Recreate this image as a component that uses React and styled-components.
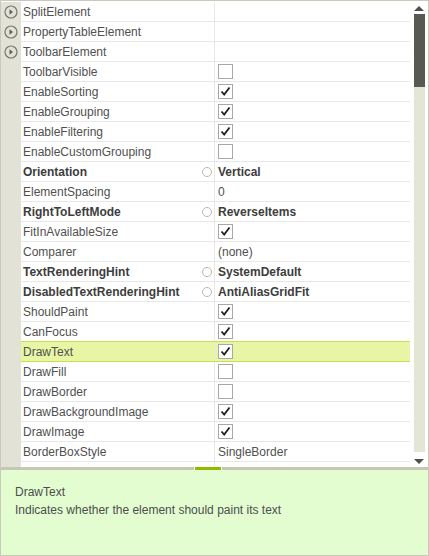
import React from 'react';
import styled, { createGlobalStyle } from 'styled-components';

// --- Global ---

const GlobalStyle = createGlobalStyle`
  html, body {
    margin: 0;
    padding: 0;
    background: #ffffff;
  }
  body {
    font-family: 'Liberation Sans', Arial, sans-serif;
  }
`;

// --- Styled Components ---

const Frame = styled.div`
  width: 429px;
  height: 556px;
  box-sizing: border-box;
  border: 1px solid #c9cabb;
  display: flex;
  flex-direction: column;
  overflow: hidden;
`;

const GridArea = styled.div`
  height: 466px;
  flex-shrink: 0;
  display: flex;
  padding-top: 1px;
  box-sizing: border-box;
  background: #ffffff;
  overflow: hidden;
`;

const Gutter = styled.div`
  width: 20px;
  flex-shrink: 0;
  background: #e2e3d6;
  display: flex;
  flex-direction: column;
`;

const GutterCell = styled.div`
  height: 20px;
  flex-shrink: 0;
  display: flex;
  align-items: center;
  justify-content: center;
`;

const Table = styled.div`
  flex: 1;
  display: flex;
  flex-direction: column;
  overflow: hidden;
`;

const Row = styled.div`
  flex-shrink: 0;
  box-sizing: border-box;
  display: flex;
  background: ${p => (p.$selected ? '#e7f5a4' : '#ffffff')};
  border-bottom: 1px solid ${p => (p.$selected ? '#c6e04e' : '#e8e8e8')};
  border-top: ${p => (p.$selected ? '1px solid #c6e04e' : '0')};
  margin-top: ${p => (p.$selected ? '-1px' : '0')};
  height: ${p => (p.$selected ? '21px' : '20px')};
`;

const NameCell = styled.div`
  width: 194px;
  flex-shrink: 0;
  box-sizing: border-box;
  border-right: 1px solid #e8e8e8;
  padding-left: 2px;
  padding-right: 2px;
  display: flex;
  align-items: center;
  justify-content: space-between;
  font-size: 12px;
  font-weight: ${p => (p.$bold ? 700 : 400)};
  color: ${p => (p.$bold ? '#3d3d3d' : '#505050')};
  white-space: nowrap;
  overflow: hidden;
`;

const ValueCell = styled.div`
  flex: 1;
  display: flex;
  align-items: center;
  padding-left: 3px;
  font-size: 12px;
  font-weight: ${p => (p.$bold ? 700 : 400)};
  color: ${p => (p.$bold ? '#3d3d3d' : '#505050')};
  white-space: nowrap;
  overflow: hidden;
`;

const CheckBox = styled.div`
  width: 15px;
  height: 15px;
  box-sizing: border-box;
  border: 1px solid #a8a8a8;
  background: #ffffff;
  display: flex;
  align-items: center;
  justify-content: center;
`;

const DefaultMark = styled.span`
  width: 10px;
  height: 10px;
  box-sizing: border-box;
  border: 1.5px solid #b8b9ac;
  border-radius: 50%;
  flex-shrink: 0;
`;

const ScrollBar = styled.div`
  width: 18px;
  flex-shrink: 0;
  background: #ffffff;
  display: flex;
  flex-direction: column;
  align-items: center;
  padding: 2px 0 1px;
  box-sizing: border-box;
`;

const Arrow = styled.div`
  width: 0;
  height: 0;
  border-left: 5px solid transparent;
  border-right: 5px solid transparent;
  ${p => (p.$down ? 'border-top: 5px solid #4f5049;' : 'border-bottom: 5px solid #4f5049;')}
  margin: 2px 0;
`;

const Track = styled.div`
  flex: 1;
  width: 11px;
  margin: 1px 0 5px;
  background: #e3e5d5;
  display: flex;
  flex-direction: column;
`;

const Thumb = styled.div`
  height: 73px;
  background: #585a52;
`;

const Splitter = styled.div`
  height: 3px;
  flex-shrink: 0;
  background: #c5c6b6;
  display: flex;
  justify-content: center;
  padding-right: 13px;
`;

const SplitHandle = styled.div`
  width: 26px;
  height: 4px;
  background: #8fbb00;
  border-left: 1px solid #ffffff;
  border-right: 1px solid #ffffff;
  border-top: 1px solid #ffffff;
  margin-top: -1px;
`;

const HelpPanel = styled.div`
  flex: 1;
  background: #e3fdd1;
  padding: 13px 14px;
  font-size: 12px;
  color: #4d4d4d;
  line-height: 18px;
`;

// --- Icons ---

const ExpandIcon = () => (
  <svg width="14" height="14" viewBox="0 0 14 14">
    <circle cx="7" cy="7" r="6" fill="none" stroke="#76776e" strokeWidth="1.2" />
    <path d="M5.5 4.2 L9 7 L5.5 9.8 Z" fill="#5e5f57" />
  </svg>
);

const CheckMark = () => (
  <svg width="11" height="11" viewBox="0 0 11 11">
    <path d="M1.5 5.5 L4.2 8.5 L9.5 1.5" fill="none" stroke="#1e1e1e" strokeWidth="1.8" />
  </svg>
);

// --- Data ---

const rows = [
  { name: 'SplitElement', expand: true },
  { name: 'PropertyTableElement', expand: true },
  { name: 'ToolbarElement', expand: true },
  { name: 'ToolbarVisible', check: false },
  { name: 'EnableSorting', check: true },
  { name: 'EnableGrouping', check: true },
  { name: 'EnableFiltering', check: true },
  { name: 'EnableCustomGrouping', check: false },
  { name: 'Orientation', value: 'Vertical', bold: true },
  { name: 'ElementSpacing', value: '0' },
  { name: 'RightToLeftMode', value: 'ReverseItems', bold: true },
  { name: 'FitInAvailableSize', check: true },
  { name: 'Comparer', value: '(none)' },
  { name: 'TextRenderingHint', value: 'SystemDefault', bold: true },
  { name: 'DisabledTextRenderingHint', value: 'AntiAliasGridFit', bold: true },
  { name: 'ShouldPaint', check: true },
  { name: 'CanFocus', check: true },
  { name: 'DrawText', check: true, selected: true },
  { name: 'DrawFill', check: false },
  { name: 'DrawBorder', check: false },
  { name: 'DrawBackgroundImage', check: true },
  { name: 'DrawImage', check: true },
  { name: 'BorderBoxStyle', value: 'SingleBorder' },
  { name: 'StretchFocusMode', value: 'SingleFontType' },
];

// --- Component ---

const App = () => {
  return (
    <>
      <GlobalStyle />
      <Frame>
        <GridArea>
          <Gutter>
            {rows.map(r => (
              <GutterCell key={r.name}>{r.expand && <ExpandIcon />}</GutterCell>
            ))}
          </Gutter>
          <Table>
            {rows.map(r => (
              <Row key={r.name} $selected={r.selected}>
                <NameCell $bold={r.bold}>
                  <span>{r.name}</span>
                  {r.bold && <DefaultMark />}
                </NameCell>
                <ValueCell $bold={r.bold}>
                  {r.check !== undefined && (
                    <CheckBox>{r.check && <CheckMark />}</CheckBox>
                  )}
                  {r.value}
                </ValueCell>
              </Row>
            ))}
          </Table>
          <ScrollBar>
            <Arrow />
            <Track>
              <Thumb />
            </Track>
            <Arrow $down />
          </ScrollBar>
        </GridArea>
        <Splitter>
          <SplitHandle />
        </Splitter>
        <HelpPanel>
          <div>DrawText</div>
          <div>Indicates whether the element should paint its text</div>
        </HelpPanel>
      </Frame>
    </>
  );
};

export default App;
